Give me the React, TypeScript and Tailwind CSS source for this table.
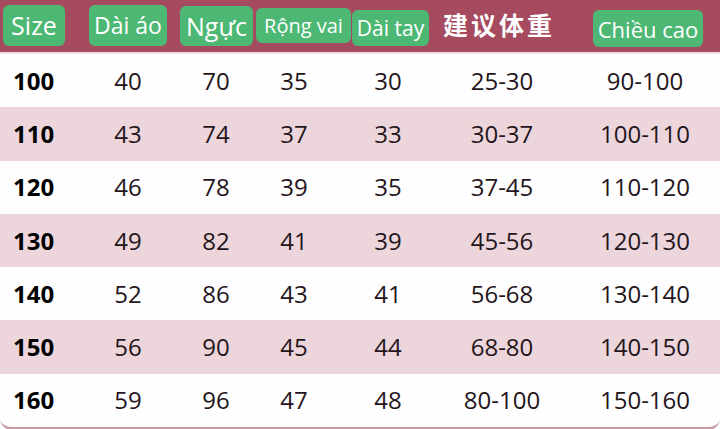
const headers = [
  { label: "Size", cls: "ml-[3px] mt-[5px] h-[41px] w-[62px] text-[25px]" },
  { label: "Dài áo", cls: "ml-[24px] mt-[5px] h-[41px] w-[78px] text-[23px]" },
  { label: "Ngực", cls: "ml-[13px] mt-[6px] h-[40px] w-[73px] text-[25px]" },
  { label: "Rộng vai", cls: "ml-[3px] mt-[8px] h-[35px] w-[95px] text-[20px]" },
  { label: "Dài tay", cls: "ml-[1px] mt-[10px] h-[36px] w-[77px] text-[21px]" },
];

const rows = [
  ["100", "40", "70", "35", "30", "25-30", "90-100"],
  ["110", "43", "74", "37", "33", "30-37", "100-110"],
  ["120", "46", "78", "39", "35", "37-45", "110-120"],
  ["130", "49", "82", "41", "39", "45-56", "120-130"],
  ["140", "52", "86", "43", "41", "56-68", "130-140"],
  ["150", "56", "90", "45", "44", "68-80", "140-150"],
  ["160", "59", "96", "47", "48", "80-100", "150-160"],
];

export default function App() {
  return (
    <div className="h-[429px] w-[720px] overflow-hidden bg-white" style={{ fontFamily: '"Open Sans", sans-serif' }}>
      <div className="flex h-[52px] items-start bg-[#a64a60]">
        {headers.map((h) => (
          <div
            key={h.label}
            className={`flex shrink-0 items-center justify-center rounded-md bg-[#4db873] leading-none text-white ${h.cls}`}
          >
            {h.label}
          </div>
        ))}
        <div
          className="ml-[14px] mt-[12px] w-[120px] shrink-0 whitespace-nowrap text-[25px] font-bold leading-none tracking-[3px] text-white"
          style={{ fontFamily: '"Noto Sans CJK SC", sans-serif' }}
        >
          建议体重
        </div>
        <div className="ml-[30px] mt-[10px] flex h-[37px] w-[110px] shrink-0 items-center justify-center rounded-md bg-[#4db873] text-[22px] leading-none text-white">
          Chiều cao
        </div>
      </div>
      <div className="h-[2px] bg-[#f1dde2]" />
      <div className="overflow-hidden rounded-b-xl border-b-[3px] border-[#c69aa5]">
        {rows.map((r, i) => (
          <div
            key={r[0]}
            className={`grid h-[53.3px] grid-cols-[70px_116px_60px_96px_92px_136px_150px] items-center text-[24px] leading-none text-[#24151b] ${
              i % 2 === 1 ? "bg-[#ecd6dc]" : "bg-[#fefefe]"
            }`}
          >
            {r.map((c, j) => (
              <div key={j} className={j === 0 ? "pl-[13px] font-bold text-black" : "text-center"}>
                {c}
              </div>
            ))}
          </div>
        ))}
      </div>
    </div>
  );
}
